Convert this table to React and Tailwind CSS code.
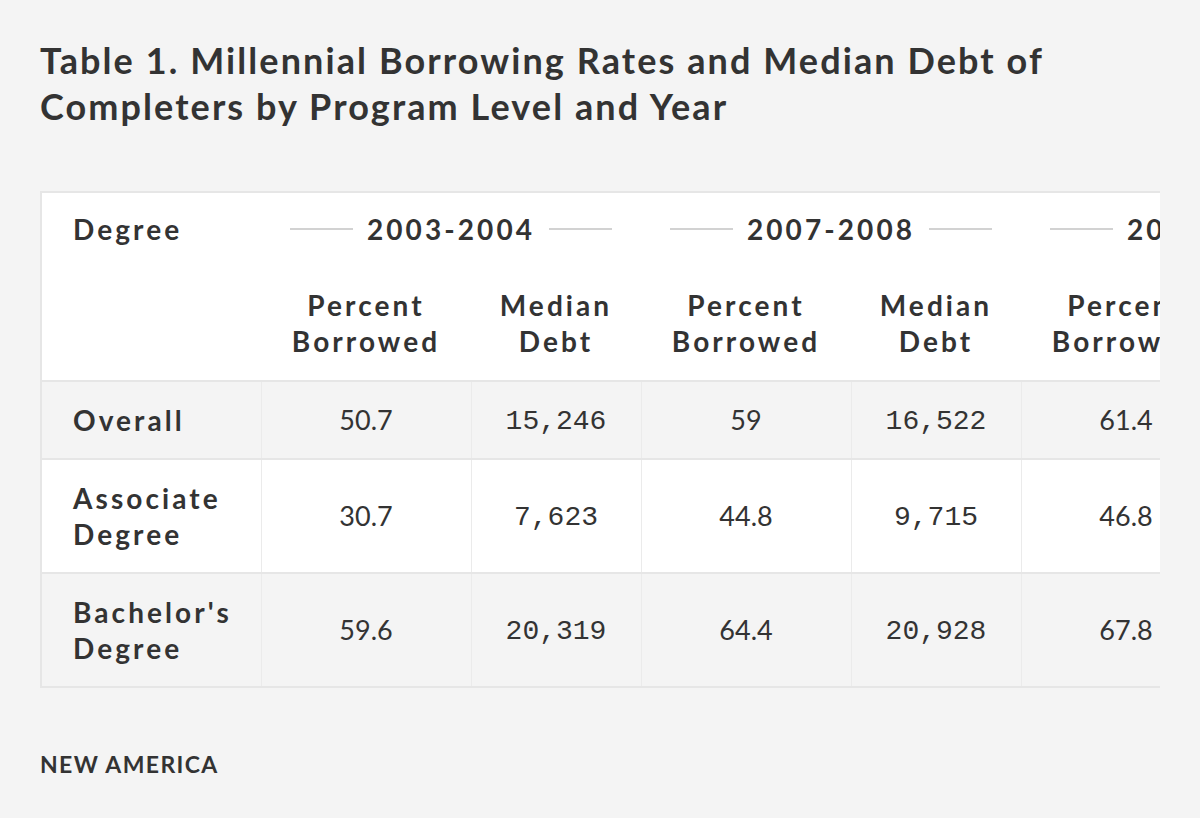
import React from 'react';

const groups = [
  { year: '2003-2004', vals: [['50.7', '15,246'], ['30.7', '7,623'], ['59.6', '20,319']] },
  { year: '2007-2008', vals: [['59', '16,522'], ['44.8', '9,715'], ['64.4', '20,928']] },
  { year: '2011-2012', vals: [['61.4', '17,950'], ['46.8', '10,200'], ['67.8', '22,100']] },
];

const rows = [
  { label: ['Overall'], bg: 'bg-[#f4f4f4]' },
  { label: ['Associate', 'Degree'], bg: 'bg-white' },
  { label: ["Bachelor's", 'Degree'], bg: 'bg-[#f4f4f4]' },
];

const sans = "font-['Lato','Noto_Sans',sans-serif]";
const mono = "font-['Liberation_Mono','DejaVu_Sans_Mono',monospace]";
const head = 'text-[28px] leading-[36px] font-bold tracking-[0.11em]';

function YearHead({ year }) {
  return (
    <th colSpan={2} className="px-[29px] pt-[18px] align-top">
      <div className="flex items-center gap-[14px]">
        <span className="h-[2px] flex-1 bg-[#d2d2d2]" />
        <span className={head}>{year}</span>
        <span className="h-[2px] flex-1 bg-[#d2d2d2]" />
      </div>
    </th>
  );
}

export default function App() {
  return (
    <div className={`min-h-screen bg-[#f4f4f4] px-10 pt-[37px] text-[#333333] ${sans}`}>
      <h1 className="text-[36px] leading-[46px] font-bold tracking-[0.058em]">
        Table 1. Millennial Borrowing Rates and Median Debt of
        <br />
        Completers by Program Level and Year
      </h1>

      <div className="mt-[62px] w-[1120px] overflow-hidden border-2 border-r-0 border-[#e6e6e6]">
        <table className="table-fixed border-collapse w-[1359px]">
          <colgroup>
            <col className="w-[219px]" />
            <col className="w-[210px]" />
            <col className="w-[170px]" />
            <col className="w-[210px]" />
            <col className="w-[170px]" />
            <col className="w-[210px]" />
            <col className="w-[170px]" />
          </colgroup>
          <thead className="bg-white">
            <tr>
              <th className={`pl-[31px] pt-[18px] text-left align-top ${head}`}>Degree</th>
              {groups.map((g) => (
                <YearHead key={g.year} year={g.year} />
              ))}
            </tr>
            <tr className="border-b-2 border-[#e6e6e6]">
              <th />
              {groups.map((g) => (
                <React.Fragment key={g.year}>
                  <th className={`pt-[40px] pb-[21px] whitespace-nowrap ${head}`}>
                    Percent
                    <br />
                    Borrowed
                  </th>
                  <th className={`pt-[40px] pb-[21px] whitespace-nowrap ${head}`}>
                    Median
                    <br />
                    Debt
                  </th>
                </React.Fragment>
              ))}
            </tr>
          </thead>
          <tbody>
            {rows.map((r, i) => (
              <tr key={i} className={`${r.bg} ${i < rows.length - 1 ? 'border-b-2 border-[#e6e6e6]' : ''}`}>
                <td className={`pl-[31px] py-[20px] ${head}`}>
                  {r.label.map((l, j) => (
                    <div key={j}>{l}</div>
                  ))}
                </td>
                {groups.map((g) => (
                  <React.Fragment key={g.year}>
                    <td className="border-l border-[#ebebeb] text-center text-[27px] leading-[36px]">
                      {g.vals[i][0]}
                    </td>
                    <td className={`border-l border-[#ebebeb] pt-[3px] text-center text-[28px] leading-[36px] ${mono}`}>
                      {g.vals[i][1]}
                    </td>
                  </React.Fragment>
                ))}
              </tr>
            ))}
          </tbody>
        </table>
      </div>

      <div className="mt-[61px] text-[23px] leading-[30px] font-bold tracking-[0.06em]">NEW AMERICA</div>
    </div>
  );
}
